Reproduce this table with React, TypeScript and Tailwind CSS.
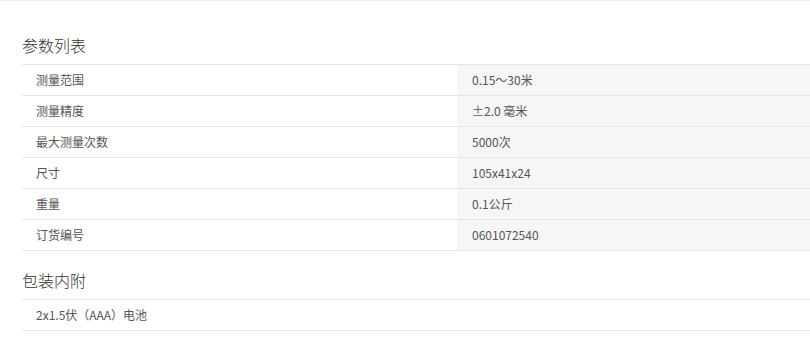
const specs: [string, string][] = [
  ["测量范围", "0.15～30米"],
  ["测量精度", "±2.0 毫米"],
  ["最大测量次数", "5000次"],
  ["尺寸", "105x41x24"],
  ["重量", "0.1公斤"],
  ["订货编号", "0601072540"],
];

function SpecRow({ label, value }: { label: string; value?: string }) {
  return (
    <div className="flex h-[31px] border-t border-[#e6e6e6] text-[12px] text-[#555]">
      <div className="w-[435px] flex items-center pl-[14px]">{label}</div>
      {value !== undefined && (
        <div className="flex-1 flex items-center pl-[15px] bg-[#f6f6f6]">{value}</div>
      )}
    </div>
  );
}

export default function App() {
  return (
    <div className="w-[810px] h-[357px] bg-white border-t border-[#eeeeee] font-['Noto_Sans_CJK_SC',sans-serif] overflow-hidden">
      <div className="pl-[22px] pt-[32px]">
        <h2 className="text-[16px] leading-[24px] font-light text-[#333] mb-[7px]">参数列表</h2>
        <div className="border-b border-[#e6e6e6]">
          {specs.map(([k, v]) => (
            <SpecRow key={k} label={k} value={v} />
          ))}
        </div>

        <h2 className="text-[16px] leading-[24px] font-light text-[#333] mt-[17px] mb-[7px]">包装内附</h2>
        <div className="border-b border-[#e6e6e6]">
          <SpecRow label="2x1.5伏（AAA）电池" />
        </div>
      </div>
    </div>
  );
}
